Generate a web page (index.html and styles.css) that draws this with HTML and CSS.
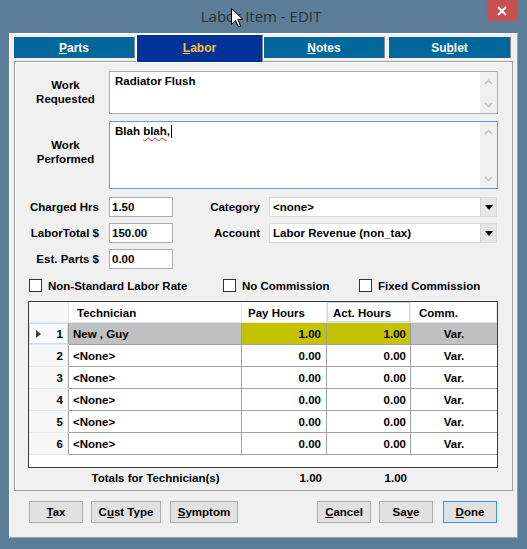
FILE: index.html
```
<!DOCTYPE html>
<html lang="en">
<head>
    <meta charset="UTF-8">
    <meta name="viewport" content="width=device-width, initial-scale=1.0">
    <title>Labor Item - EDIT</title>
    <link rel="stylesheet" href="styles.css">
</head>
<body>
    <div class="window">
        <div class="titlebar">
            <span class="title">Labor Item - EDIT</span>
            <span class="close">
                <svg width="10" height="10" viewBox="0 0 10 10"><path d="M1 1 L9 9 M9 1 L1 9" stroke="#fff" stroke-width="2" fill="none"/></svg>
            </span>
        </div>

        <div class="client">
            <div class="tabs">
                <div class="tab tab-parts"><u>P</u>arts</div>
                <div class="tab tab-labor"><u>L</u>abor</div>
                <div class="tab tab-notes"><u>N</u>otes</div>
                <div class="tab tab-sublet">Su<u>b</u>let</div>
            </div>

            <div class="page">
                <div class="memo-row">
                    <div class="memo-label">Work<br>Requested</div>
                    <div class="memo memo-short">
                        <div class="memo-text">Radiator Flush</div>
                        <div class="memo-scroll">
                            <svg width="9" height="6" viewBox="0 0 9 6"><path d="M1 5 L4.5 1.5 L8 5" stroke="#c2c2c2" stroke-width="1.6" fill="none"/></svg>
                            <svg width="9" height="6" viewBox="0 0 9 6"><path d="M1 1 L4.5 4.5 L8 1" stroke="#c2c2c2" stroke-width="1.6" fill="none"/></svg>
                        </div>
                    </div>
                </div>

                <div class="memo-row memo-row-second">
                    <div class="memo-label memo-label-up">Work<br>Performed</div>
                    <div class="memo memo-tall memo-focus">
                        <div class="memo-text">Blah <span class="typo">blah</span>,<span class="caret"></span></div>
                        <div class="memo-scroll">
                            <svg width="9" height="6" viewBox="0 0 9 6"><path d="M1 5 L4.5 1.5 L8 5" stroke="#c2c2c2" stroke-width="1.6" fill="none"/></svg>
                            <svg width="9" height="6" viewBox="0 0 9 6"><path d="M1 1 L4.5 4.5 L8 1" stroke="#c2c2c2" stroke-width="1.6" fill="none"/></svg>
                        </div>
                    </div>
                </div>

                <div class="fields">
                    <div class="field-label">Charged Hrs</div>
                    <div class="input">1.50</div>
                    <div class="field-label field-label-right">Category</div>
                    <div class="combo">
                        <span class="combo-text">&lt;none&gt;</span>
                        <span class="combo-btn"><span class="arrow-down"></span></span>
                    </div>

                    <div class="field-label">LaborTotal $</div>
                    <div class="input">150.00</div>
                    <div class="field-label field-label-right">Account</div>
                    <div class="combo">
                        <span class="combo-text">Labor Revenue (non_tax)</span>
                        <span class="combo-btn"><span class="arrow-down"></span></span>
                    </div>

                    <div class="field-label">Est. Parts $</div>
                    <div class="input">0.00</div>
                </div>

                <div class="checks">
                    <label class="check"><span class="box"></span>Non-Standard Labor Rate</label>
                    <label class="check"><span class="box"></span>No Commission</label>
                    <label class="check"><span class="box"></span>Fixed Commission</label>
                </div>

                <div class="grid">
                    <table class="techs">
                        <colgroup>
                            <col class="c-num">
                            <col class="c-tech">
                            <col class="c-pay">
                            <col class="c-act">
                            <col class="c-comm">
                        </colgroup>
                        <thead>
                            <tr>
                                <th class="num"></th>
                                <th class="h-tech">Technician</th>
                                <th class="h-hours">Pay Hours</th>
                                <th class="h-hours h-sorted">Act. Hours</th>
                                <th class="h-comm">Comm.</th>
                            </tr>
                        </thead>
                        <tbody>
                            <tr class="current">
                                <td class="num"><div class="num-in"><span class="pointer"></span><span>1</span></div></td>
                                <td>New , Guy</td>
                                <td class="pay hot">1.00</td>
                                <td class="act hot">1.00</td>
                                <td class="comm">Var.</td>
                            </tr>
                            <tr>
                                <td class="num"><div class="num-in"><span></span><span>2</span></div></td>
                                <td>&lt;None&gt;</td>
                                <td class="pay">0.00</td>
                                <td class="act">0.00</td>
                                <td class="comm">Var.</td>
                            </tr>
                            <tr>
                                <td class="num"><div class="num-in"><span></span><span>3</span></div></td>
                                <td>&lt;None&gt;</td>
                                <td class="pay">0.00</td>
                                <td class="act">0.00</td>
                                <td class="comm">Var.</td>
                            </tr>
                            <tr>
                                <td class="num"><div class="num-in"><span></span><span>4</span></div></td>
                                <td>&lt;None&gt;</td>
                                <td class="pay">0.00</td>
                                <td class="act">0.00</td>
                                <td class="comm">Var.</td>
                            </tr>
                            <tr>
                                <td class="num"><div class="num-in"><span></span><span>5</span></div></td>
                                <td>&lt;None&gt;</td>
                                <td class="pay">0.00</td>
                                <td class="act">0.00</td>
                                <td class="comm">Var.</td>
                            </tr>
                            <tr>
                                <td class="num"><div class="num-in"><span></span><span>6</span></div></td>
                                <td>&lt;None&gt;</td>
                                <td class="pay">0.00</td>
                                <td class="act">0.00</td>
                                <td class="comm">Var.</td>
                            </tr>
                        </tbody>
                    </table>
                </div>

                <div class="totals">
                    <span class="t-spacer"></span>
                    <span class="t-label">Totals for Technician(s)</span>
                    <span class="t-pay">1.00</span>
                    <span class="t-act">1.00</span>
                </div>
            </div>

            <div class="buttons">
                <div class="btn-group">
                    <button class="btn btn-tax"><u>T</u>ax</button>
                    <button class="btn btn-cust">C<u>u</u>st Type</button>
                    <button class="btn btn-symptom"><u>S</u>ymptom</button>
                </div>
                <div class="btn-group">
                    <button class="btn btn-cancel"><u>C</u>ancel</button>
                    <button class="btn btn-save">Sa<u>v</u>e</button>
                    <button class="btn btn-done"><u>D</u>one</button>
                </div>
            </div>
        </div>

        <!-- mouse pointer over the title -->
        <svg class="cursor" width="13" height="20" viewBox="0 0 13 20">
            <path d="M0.5 0.5 L0.5 16.5 L4.5 12.5 L7.5 19 L9.8 18 L6.8 11.5 L12 11.5 Z" fill="#fff" stroke="#000" stroke-width="1"/>
        </svg>
    </div>
</body>
</html>
```

FILE: styles.css
```
* {
    margin: 0;
    padding: 0;
    box-sizing: border-box;
}

body {
    width: 527px;
    height: 549px;
    background-color: #5b7d98;
    font-family: "Liberation Sans", Arial, sans-serif;
    font-size: 11.5px;
    font-weight: bold;
    color: #000;
    overflow: hidden;
}

.window {
    position: relative;
    width: 527px;
    height: 549px;
    background-color: #5b7d98;
}

/* barra de título */
.titlebar {
    display: grid;
    grid-template-columns: 1fr auto 1fr;
    height: 33px;
    padding-right: 10px;
}

.title {
    grid-column: 2;
    align-self: center;
    margin-left: 5px;
    padding-bottom: 1px;
    font-family: "Open Sans", "Noto Sans", sans-serif;
    font-size: 15px;
    font-weight: normal;
    color: #25313b;
}

.close {
    grid-column: 3;
    justify-self: end;
    display: flex;
    align-items: center;
    justify-content: center;
    width: 30px;
    height: 21px;
    background-color: #c75050;
}

.cursor {
    position: absolute;
    left: 231px;
    top: 8px;
}

/* área do formulário */
.client {
    width: 509px;
    height: 505px;
    margin-left: 9px;
    background-color: #f0f0f0;
    border: 1px solid #a0a0a0;
    border-top-color: #fff;
    border-left-color: #fff;
}

.tabs {
    display: flex;
    align-items: flex-start;
    height: 27px;
    padding-left: 3px;
}

.tab {
    height: 22px;
    margin-top: 2px;
    display: flex;
    align-items: center;
    justify-content: center;
    background-color: #00679b;
    color: #fff;
    font-size: 12px;
    border-top: 1px solid #fff;
    border-left: 1px solid #fff;
    border-right: 1px solid #8a8a8a;
}

.tab u {
    text-underline-offset: 1px;
}

.tab-parts {
    width: 122px;
}

.tab-labor {
    position: relative;
    z-index: 1;
    width: 127px;
    height: 28px;
    margin-top: 0;
    margin-left: 1px;
    background-color: #00339a;
    color: #fdc23c;
    padding-bottom: 1px;
}

.tab-notes {
    width: 122px;
}

.tab-sublet {
    width: 123px;
    margin-left: 3px;
}

.page {
    width: 499px;
    height: 430px;
    margin-left: 4px;
    padding: 9px 0 0 7px;
    border: 1px solid #a0a0a0;
    box-shadow: inset 1px 1px 0 #fff;
}

/* memos */
.memo-row {
    display: flex;
    align-items: center;
}

.memo-row-second {
    margin-top: 7px;
}

.memo-label {
    width: 87px;
    text-align: center;
    line-height: 14px;
    padding-bottom: 1px;
}

.memo-label-up {
    margin-bottom: 6px;
}

.memo {
    display: flex;
    width: 389px;
    background-color: #fff;
    border: 1px solid #ababab;
}

.memo-short {
    height: 43px;
}

.memo-tall {
    height: 68px;
}

.memo-focus {
    border-color: #5f9ed8;
}

.memo-text {
    flex: 1;
    padding: 3px 5px;
    line-height: 13px;
}

.typo {
    text-decoration: underline wavy #e02020;
    text-decoration-thickness: 1px;
    text-underline-offset: 2px;
}

.caret {
    display: inline-block;
    width: 1px;
    height: 13px;
    margin-left: 1px;
    vertical-align: -3px;
    background-color: #000;
}

.memo-scroll {
    width: 17px;
    display: flex;
    flex-direction: column;
    justify-content: space-between;
    align-items: center;
    padding: 7px 0 5px;
    background-color: #f0f0f0;
}

.memo-tall .memo-scroll {
    padding-bottom: 6px;
}

/* campos */
.fields {
    display: grid;
    grid-template-columns: 87px 64px 96px 228px;
    grid-auto-rows: 20px;
    row-gap: 6px;
    margin-top: 8px;
}

.field-label {
    display: flex;
    align-items: center;
    justify-content: flex-end;
    padding-right: 10px;
}

.field-label-right {
    padding-right: 9px;
}

.input {
    display: flex;
    align-items: center;
    padding-left: 2px;
    background-color: #fff;
    border: 1px solid #ababab;
}

.combo {
    display: flex;
    align-items: stretch;
    background-color: #fff;
    border: 1px solid #dadada;
}

.combo-text {
    flex: 1;
    display: flex;
    align-items: center;
    padding-left: 3px;
}

.combo-btn {
    width: 16px;
    display: flex;
    align-items: center;
    justify-content: center;
    background-color: #e6e6e6;
    border-left: 1px solid #d4d4d4;
}

.arrow-down {
    width: 0;
    height: 0;
    border-left: 4px solid transparent;
    border-right: 4px solid transparent;
    border-top: 5px solid #000;
}

/* checkboxes */
.checks {
    display: grid;
    grid-template-columns: 194px 136px auto;
    margin-top: 10px;
    padding-left: 7px;
    height: 13px;
}

.check {
    display: flex;
    align-items: center;
    gap: 6px;
}

.box {
    width: 13px;
    height: 13px;
    background-color: #fff;
    border: 1px solid #333;
}

/* grade dos técnicos */
.grid {
    width: 470px;
    height: 167px;
    margin: 9px 0 0 6px;
    background-color: #fff;
    border: 1px solid #3a3a3a;
}

.techs {
    width: 468px;
    table-layout: fixed;
    border-collapse: separate;
    border-spacing: 0;
}

.c-num { width: 40px; }
.c-tech { width: 173px; }
.c-pay { width: 85px; }
.c-act { width: 84px; }
.c-comm { width: 86px; }

.techs thead tr {
    height: 21px;
}

.techs th {
    text-align: left;
    font-weight: bold;
    background-color: #fff;
    border-right: 1px solid #e4e8ec;
    border-bottom: 1px solid #dfe6ee;
    padding-top: 1px;
}

.techs th.num {
    background-color: #f6f6f6;
}

.h-tech { padding-left: 8px; }
.h-hours { padding-left: 6px; }
.h-comm { padding-left: 8px; }

.techs th.h-sorted {
    box-shadow: inset 0 0 0 1px #cdd9e6;
}

.techs tbody tr {
    height: 22px;
}

.techs td {
    padding: 0 4px;
    border-right: 1px solid #a0a0a0;
    border-bottom: 1px solid #a0a0a0;
    white-space: nowrap;
}

.techs td:last-child {
    border-right: 0;
}

.techs td.num {
    padding: 0 5px 0 7px;
    background-color: #f7f7f7;
    border-bottom-color: #e3eaf1;
}

.num-in {
    display: flex;
    justify-content: space-between;
    align-items: center;
}

.pointer {
    width: 0;
    height: 0;
    border-left: 5px solid #3c3c3c;
    border-top: 4.5px solid transparent;
    border-bottom: 4.5px solid transparent;
}

.current td {
    background-color: #c0c0c0;
}

.current td.num {
    background-color: #fafafa;
    box-shadow: inset 0 0 0 1px #cfdceb;
}

.current td.hot {
    background-color: #c3c300;
}

.pay {
    text-align: right;
    padding-right: 5px !important;
}

.act {
    text-align: right;
}

.comm {
    text-align: center;
}

.totals {
    display: flex;
    align-items: center;
    height: 20px;
    margin-left: 6px;
}

.t-spacer { width: 41px; }

.t-label {
    width: 173px;
    text-align: center;
}

.t-pay {
    width: 85px;
    text-align: right;
    padding-right: 5px;
}

.t-act {
    width: 84px;
    text-align: right;
    padding-right: 4px;
}

/* botões */
.buttons {
    display: flex;
    justify-content: space-between;
    margin-top: 10px;
    padding: 0 20px 0 19px;
}

.btn-group {
    display: flex;
}

.btn {
    height: 22px;
    font-family: "Liberation Sans", Arial, sans-serif;
    font-size: 11.5px;
    font-weight: bold;
    color: #000;
    background-color: #e1e1e1;
    border: 1px solid #adadad;
}

.btn-tax { width: 54px; }
.btn-cust { width: 70px; margin-left: 8px; }
.btn-symptom { width: 68px; margin-left: 9px; }
.btn-cancel { width: 54px; }
.btn-save { width: 54px; margin-left: 8px; }
.btn-done { width: 54px; margin-left: 10px; border-color: #3d95e8; }
```
